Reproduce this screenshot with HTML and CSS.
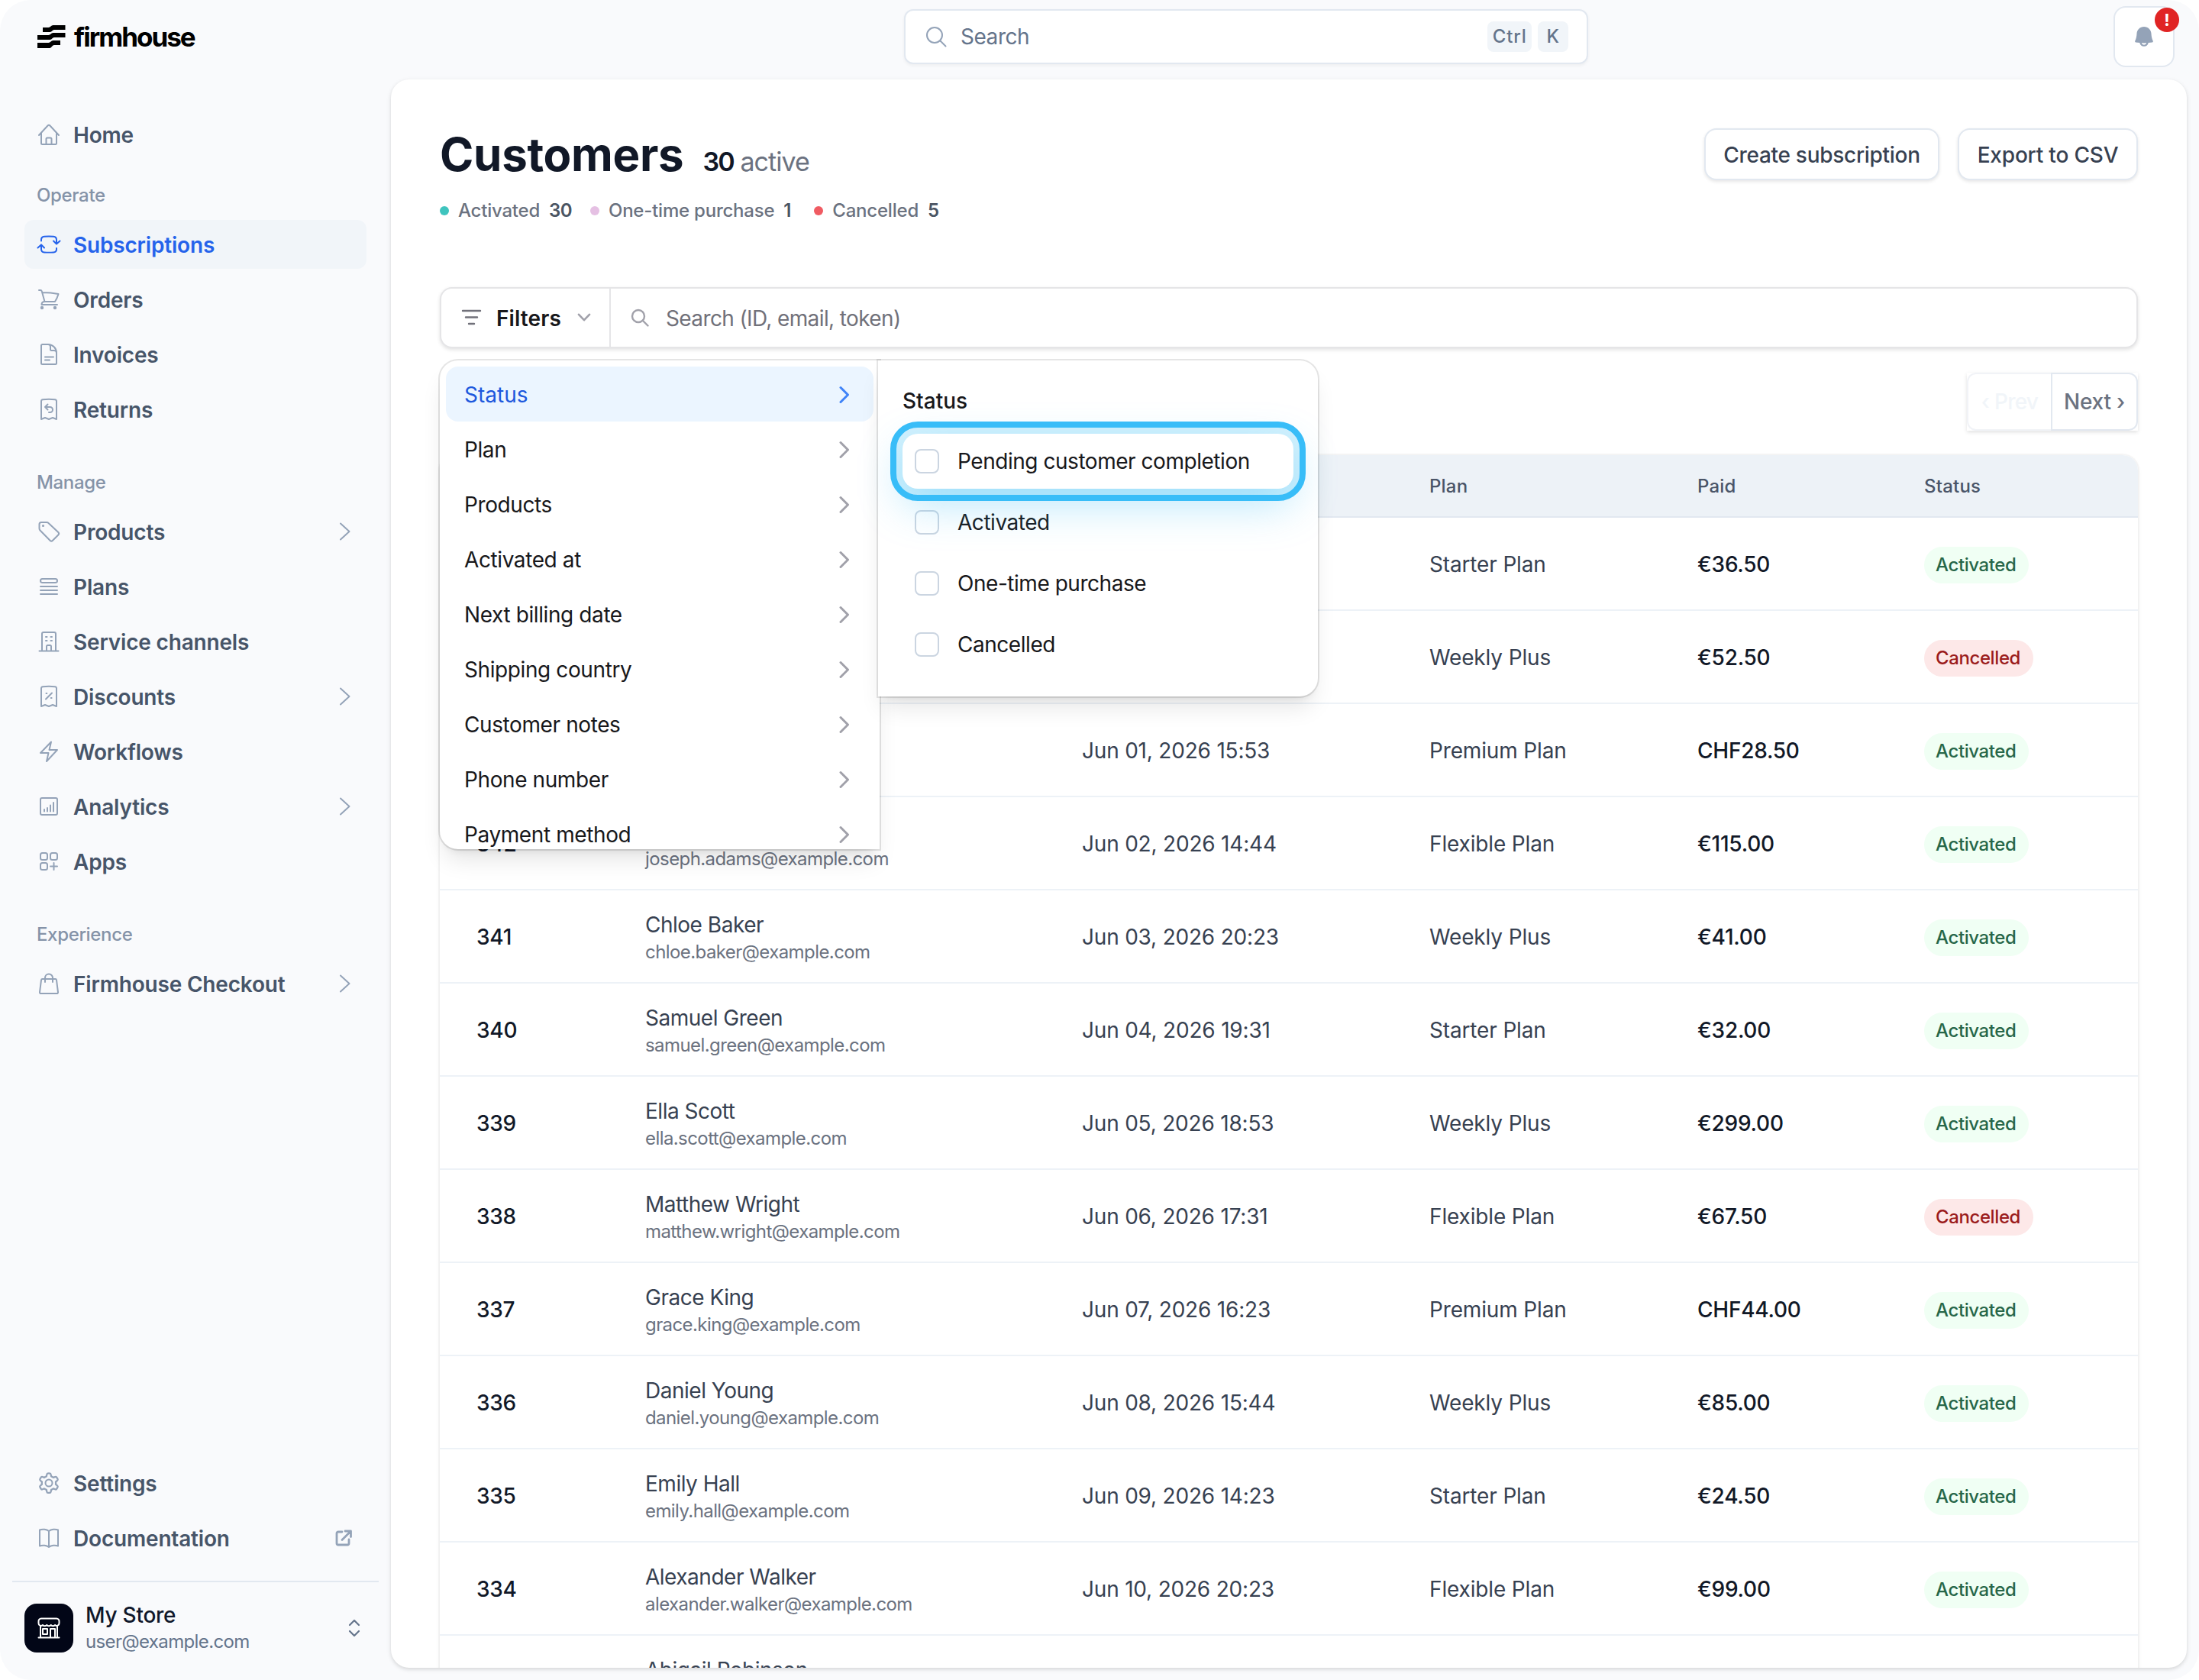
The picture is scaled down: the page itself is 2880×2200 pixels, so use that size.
FILE: index.html
```html
<!DOCTYPE html>
<html lang="en">
<head>
<meta charset="utf-8">
<title>Customers – Firmhouse</title>
<link rel="stylesheet" href="styles.css">
</head>
<body>
<svg class="sprite" aria-hidden="true">
  <symbol id="chev" viewBox="0 0 16 24"><path d="M2 1.5 13.5 12 2 22.5"/></symbol>
  <symbol id="chev-s" viewBox="0 0 14 24"><path d="M2 2.5 11.5 12 2 21.5"/></symbol>
</svg>
<div class="app">
  <aside class="sidebar">
    <div class="logo">
      <svg width="37" height="30" viewBox="0 0 37 30"><g fill="#000"><path d="M7 3h7.500c2.500-.2 3.500-3 6-3H36.500v6H22c-2.500 0-3 3-5.500 3H7z"/><path d="M0 13h14.500c2.500-.2 3.500-3 6-3H36.500v6H22c-2.500 0-3 3-5.500 3H0z"/><path d="M0 23h14.500c2.500-.2 3.500-3 6-3H30v6H22c-2.500 0-3 3-5.500 4H0z"/></g></svg>
      <span class="wordmark">firmhouse</span>
    </div>
    <nav class="nav">
      <a class="item"><svg class="ic" viewBox="0 0 32 32"><path d="M3 17 14.800 4.300a1.700 1.700 0 0 1 2.400 0L29 17"/><path d="M6 14v13.500A1.500 1.500 0 0 0 7.500 29h17a1.500 1.500 0 0 0 1.500-1.500V14M12.500 28.500V22a1.500 1.500 0 0 1 1.500-1.500h4a1.500 1.500 0 0 1 1.500 1.500v6.500"/></svg>Home</a>
      <h2 class="label first">Operate</h2>
      <a class="item on"><svg class="ic" viewBox="0 0 32 32"><path d="M6 11.500V10c0-2.500 1.500-4 4-4.200 4-.3 8-.3 12 0 2.500.2 4 1.700 4 4.200v5M22 11.500l4 4 4.500-4M26 21v1.500c0 2.500-1.500 3.700-4 3.900-4 .3-8 .3-12 0-2.500-.2-4-1.700-4-4.200V16.500M1.500 20.500 6 16.500l4 4"/></svg>Subscriptions</a>
      <a class="item"><svg class="ic" viewBox="0 0 32 32"><path d="M3 4h2c1 0 1.500.5 1.800 1.500L10.500 19M7.300 7c7 0 14 .5 21.200 2-1 3.500-2.500 7-4.500 10H10.500C8 19 6.500 20.500 6.500 23H27"/><circle cx="7" cy="27" r="1.200" fill="currentColor"/><circle cx="24" cy="27" r="1.200" fill="currentColor"/></svg>Orders</a>
      <a class="item"><svg class="ic" viewBox="0 0 32 32"><path d="M15 3H7.500A1.500 1.500 0 0 0 6 4.500v23A1.500 1.500 0 0 0 7.500 29h17a1.500 1.500 0 0 0 1.500-1.500V14A11 11 0 0 0 15 3zM15 3c2 0 3 1.500 3 3v3.500a1.500 1.500 0 0 0 1.500 1.500H23c1.500 0 3 1.500 3 3M11 19.500h11M11 23.500h6"/></svg>Invoices</a>
      <a class="item"><svg class="ic" viewBox="0 0 32 32"><path d="M6 29V5.500C6 4.200 6.800 3.300 8 3.200c5.300-.5 10.700-.5 16 0 1.200.1 2 1 2 2.300V29l-5-2-5 2-5-2z"/><path d="M14.500 9.500 11 13l3.500 3.500M11 13h6.500a3.500 3.500 0 0 1 0 7H16"/></svg>Returns</a>
      <h2 class="label">Manage</h2>
      <a class="item"><svg class="ic" viewBox="0 0 32 32"><path d="M13 4H6a2.500 2.500 0 0 0-2.500 2.500V12c0 1 .3 1.800 1 2.500L17.500 27.800c1 1 2.500 1 3.500 0l7.300-7.300c1-1 1-2.500 0-3.500L15.500 4.900C14.800 4.200 14 4 13 4z"/><circle cx="8.500" cy="8.500" r=".6" fill="currentColor"/></svg>Products<svg class="cv" viewBox="0 0 16 24"><use href="#chev"/></svg></a>
      <a class="item"><svg class="ic" viewBox="0 0 32 32"><rect x="5" y="6" width="22" height="5" rx="2.500"/><path d="M5 16h22M5 21h22M5 26h22"/></svg>Plans</a>
      <a class="item"><svg class="ic" viewBox="0 0 32 32"><path d="M3.500 28.500h25M7 28.500V6a2 2 0 0 1 2-2h14a2 2 0 0 1 2 2v22.500M13 28v-5.500a1.500 1.500 0 0 1 1.500-1.500h3a1.500 1.500 0 0 1 1.500 1.500V28M12 10h1.500M18.500 10H20M12 15h1.500M18.500 15H20"/></svg>Service channels</a>
      <a class="item"><svg class="ic" viewBox="0 0 32 32"><path d="M6 29V5.500C6 4.200 6.800 3.300 8 3.200c5.300-.5 10.700-.5 16 0 1.200.1 2 1 2 2.300V29l-5-2-5 2-5-2z"/><path d="m12 19.500 8-8M12.500 12h.8M18.800 18h.8"/></svg>Discounts<svg class="cv" viewBox="0 0 16 24"><use href="#chev"/></svg></a>
      <a class="item"><svg class="ic" viewBox="0 0 32 32"><path d="M5 18 19 3.500 16.500 14H27L13 29l2.500-11z"/></svg>Workflows</a>
      <a class="item"><svg class="ic" viewBox="0 0 32 32"><rect x="5" y="5" width="22" height="22" rx="2"/><path d="M10 20v2.500M14 18v4.500M18 14.500v8M22 11v11.500"/></svg>Analytics<svg class="cv" viewBox="0 0 16 24"><use href="#chev"/></svg></a>
      <a class="item"><svg class="ic" viewBox="0 0 32 32"><rect x="5" y="5" width="9" height="9" rx="2.500"/><rect x="18" y="5" width="9" height="9" rx="2.500"/><rect x="5" y="18" width="9" height="9" rx="2.500"/><path d="M22.500 18v9M18 22.500h9"/></svg>Apps</a>
      <h2 class="label">Experience</h2>
      <a class="item"><svg class="ic" viewBox="0 0 32 32"><path d="M7.500 10h17a1.500 1.500 0 0 1 1.500 1.300l2 16a1.500 1.500 0 0 1-1.500 1.700h-21A1.500 1.500 0 0 1 4 27.300l2-16A1.500 1.500 0 0 1 7.500 10zM11 14V8.500a5 5 0 0 1 10 0V14"/></svg>Firmhouse Checkout<svg class="cv" viewBox="0 0 16 24"><use href="#chev"/></svg></a>
    </nav>
    <nav class="nav lower">
      <a class="item"><svg class="ic" viewBox="0 0 32 32"><path d="M13.700 5.500a1.500 1.500 0 0 1 1.500-1.300h1.600a1.500 1.500 0 0 1 1.500 1.300l.4 2.100c.9.300 1.700.8 2.400 1.400l2-.8a1.500 1.500 0 0 1 1.900.7l.9 1.600a1.500 1.500 0 0 1-.4 1.900l-1.700 1.400a9 9 0 0 1 0 2.800l1.700 1.400a1.500 1.500 0 0 1 .4 1.900l-.9 1.600a1.500 1.500 0 0 1-1.900.7l-2-.8c-.7.600-1.500 1.100-2.400 1.400l-.4 2.100a1.500 1.500 0 0 1-1.500 1.300h-1.600a1.500 1.500 0 0 1-1.500-1.300l-.4-2.100c-.9-.3-1.700-.8-2.400-1.400l-2 .8a1.500 1.500 0 0 1-1.900-.7l-.9-1.600a1.500 1.500 0 0 1 .4-1.900l1.700-1.400a9 9 0 0 1 0-2.800l-1.700-1.400a1.500 1.500 0 0 1-.4-1.900L7 8.900a1.500 1.500 0 0 1 1.900-.7l2 .8c.7-.6 1.500-1.100 2.400-1.400z" transform="translate(-2.600 -1.500) scale(1.160)"/><circle cx="16" cy="16" r="4.500"/></svg>Settings</a>
      <a class="item"><svg class="ic" viewBox="0 0 32 32"><path d="M16 7C13 4.500 7.500 4 4 5.500v21c3.500-1.500 9-1 12 1.500 3-2.500 8.500-3 12-1.500v-21C24.500 4 19 4.500 16 7zM16 7v21"/></svg>Documentation<svg class="ext" viewBox="0 0 22 22"><path d="M9 3H4a2 2 0 0 0-2 2v13a2 2 0 0 0 2 2h12a2 2 0 0 0 2-2v-5M13 2h7.500v7.500M20 2.500 9 13.500"/></svg></a>
    </nav>
    <div class="account">
      <span class="avatar"><svg width="32" height="32" viewBox="0 0 32 32"><path d="M5 14v14M27 14v14M2.500 28.500h27M6 3.500h20a3.500 3.500 0 0 1 3.500 4v2a3.200 3.200 0 0 1-5.400 2.500 4 4 0 0 1-5.400 0 4 4 0 0 1-5.400 0 4 4 0 0 1-5.400 0A3.200 3.200 0 0 1 2.500 9.500v-2A3.500 3.500 0 0 1 6 3.500zM8 17h6v7H8zM18 28V17h6v11"/></svg></span>
      <span class="who"><b>My Store</b><small>user@example.com</small></span>
      <svg class="updown" width="16" height="24" viewBox="0 0 16 24"><path d="M2 8l6-6 6 6M2 16l6 6 6-6"/></svg>
    </div>
  </aside>

  <div class="body">
    <header class="topbar">
      <div class="gsearch">
        <svg width="28" height="28" viewBox="0 0 28 28"><circle cx="12" cy="12" r="10"/><path d="m19.500 19.500 7 7"/></svg>
        <span class="ph">Search</span><kbd class="ctrl">Ctrl</kbd><kbd>K</kbd>
      </div>
      <div class="bell">
        <svg width="26" height="28" viewBox="0 0 26 28"><path fill="#94a3b8" d="M13 1C7.500 1 3.800 5 3.500 10c-.2 4-.9 7-2.200 9.600-.5 1 0 1.900 1 2L7.300 22a5.800 5.800 0 0 0 11.400 0l5-.4c1-.1 1.500-1 1-2-1.300-2.600-2-5.600-2.200-9.600C22.200 5 18.500 1 13 1zM9.800 22.300c2.200.2 4.200.2 6.400 0a3.300 3.300 0 0 1-6.400 0z"/></svg>
        <span class="alert">!</span>
      </div>
    </header>

    <main class="card">
      <div class="head">
        <div class="title"><h1>Customers</h1><span class="count"><b>30</b> active</span></div>
        <div class="actions"><button class="btn create">Create subscription</button><button class="btn export">Export to CSV</button></div>
      </div>
      <div class="legend">
        <span class="key"><i class="dot teal"></i>Activated<b>30</b></span>
        <span class="key"><i class="dot pink"></i>One-time purchase<b>1</b></span>
        <span class="key"><i class="dot red"></i>Cancelled<b>5</b></span>
      </div>

      <div class="filterbar">
        <div class="filters">
          <svg width="28" height="24" viewBox="0 0 28 24" stroke="#71717a" stroke-width="2.400"><path d="M3 3h23M7 11.500h15M11 20h7"/></svg>
          <b>Filters</b>
          <svg class="down" width="18" height="12" viewBox="0 0 18 12" stroke="#a1a1aa" stroke-width="2.600"><path d="m2 1.800 7 7.400 7-7.400"/></svg>
        </div>
        <div class="query">
          <svg width="24" height="24" viewBox="0 0 24 24" stroke="#a1a1aa" stroke-width="2.400"><circle cx="10" cy="10" r="8"/><path d="m16 16 6.500 6.500"/></svg>
          <span>Search (ID, email, token)</span>
        </div>

        <div class="menu">
          <a class="mi on">Status<svg><use href="#chev-s"/></svg></a>
          <a class="mi">Plan<svg><use href="#chev-s"/></svg></a>
          <a class="mi">Products<svg><use href="#chev-s"/></svg></a>
          <a class="mi">Activated at<svg><use href="#chev-s"/></svg></a>
          <a class="mi">Next billing date<svg><use href="#chev-s"/></svg></a>
          <a class="mi">Shipping country<svg><use href="#chev-s"/></svg></a>
          <a class="mi">Customer notes<svg><use href="#chev-s"/></svg></a>
          <a class="mi">Phone number<svg><use href="#chev-s"/></svg></a>
          <a class="mi">Payment method<svg><use href="#chev-s"/></svg></a>
        </div>
        <div class="submenu">
          <h3>Status</h3>
          <label class="opt focus"><i class="box"></i>Pending customer completion</label>
          <label class="opt"><i class="box"></i>Activated</label>
          <label class="opt"><i class="box"></i>One-time purchase</label>
          <label class="opt"><i class="box"></i>Cancelled</label>
        </div>
      </div>

      <div class="pager"><span class="prev">‹ Prev</span><span class="next">Next ›</span></div>

      <div class="table">
        <div class="tr th"><span></span><span></span><span></span><span>Plan</span><span>Paid</span><span>Status</span></div>
        <div class="tr"><b></b><span></span><span></span><span>Starter Plan</span><b>€36.50</b><em class="ok">Activated</em></div>
        <div class="tr"><b></b><span></span><span></span><span>Weekly Plus</span><b>€52.50</b><em class="no">Cancelled</em></div>
        <div class="tr"><b></b><span></span><span class="date">Jun 01, 2026 15:53</span><span>Premium Plan</span><b>CHF28.50</b><em class="ok">Activated</em></div>
        <div class="tr"><b>342</b><span class="cust">Joseph Adams<small>joseph.adams@example.com</small></span><span class="date">Jun 02, 2026 14:44</span><span>Flexible Plan</span><b>€115.00</b><em class="ok">Activated</em></div>
        <div class="tr"><b>341</b><span class="cust">Chloe Baker<small>chloe.baker@example.com</small></span><span class="date">Jun 03, 2026 20:23</span><span>Weekly Plus</span><b>€41.00</b><em class="ok">Activated</em></div>
        <div class="tr"><b>340</b><span class="cust">Samuel Green<small>samuel.green@example.com</small></span><span class="date">Jun 04, 2026 19:31</span><span>Starter Plan</span><b>€32.00</b><em class="ok">Activated</em></div>
        <div class="tr"><b>339</b><span class="cust">Ella Scott<small>ella.scott@example.com</small></span><span class="date">Jun 05, 2026 18:53</span><span>Weekly Plus</span><b>€299.00</b><em class="ok">Activated</em></div>
        <div class="tr"><b>338</b><span class="cust">Matthew Wright<small>matthew.wright@example.com</small></span><span class="date">Jun 06, 2026 17:31</span><span>Flexible Plan</span><b>€67.50</b><em class="no">Cancelled</em></div>
        <div class="tr"><b>337</b><span class="cust">Grace King<small>grace.king@example.com</small></span><span class="date">Jun 07, 2026 16:23</span><span>Premium Plan</span><b>CHF44.00</b><em class="ok">Activated</em></div>
        <div class="tr"><b>336</b><span class="cust">Daniel Young<small>daniel.young@example.com</small></span><span class="date">Jun 08, 2026 15:44</span><span>Weekly Plus</span><b>€85.00</b><em class="ok">Activated</em></div>
        <div class="tr"><b>335</b><span class="cust">Emily Hall<small>emily.hall@example.com</small></span><span class="date">Jun 09, 2026 14:23</span><span>Starter Plan</span><b>€24.50</b><em class="ok">Activated</em></div>
        <div class="tr"><b>334</b><span class="cust">Alexander Walker<small>alexander.walker@example.com</small></span><span class="date">Jun 10, 2026 20:23</span><span>Flexible Plan</span><b>€99.00</b><em class="ok">Activated</em></div>
        <div class="tr"><b></b><span class="cust">Abigail Robinson<small>&nbsp;</small></span></div>
      </div>
    </main>
  </div>
</div>
</body>
</html>
```
FILE: styles.css
```css
*{box-sizing:border-box}
html{background:#fff}
body{margin:0;font:400 28px/40px Inter,"Liberation Sans",sans-serif;color:#374151}
h1,h2,h3{margin:0}
svg{fill:none;stroke-linecap:round;stroke-linejoin:round;flex:none}
.sprite{display:none}
.app{display:flex;width:2880px;height:2200px;background:#f9fafc;border-radius:40px;overflow:hidden}

/* Sidebar */
.sidebar{width:512px;height:2200px;padding:0 16px;display:flex;flex-direction:column}
.logo{display:flex;align-items:center;gap:11px;height:96px;padding-left:33px}
.wordmark{font-weight:700;font-size:35px;letter-spacing:-2px;color:#000}
.nav{display:flex;flex-direction:column;gap:8px;padding:48px 16px 0}
.nav.lower{margin-top:auto;padding:0 16px 24px}
.item{display:flex;align-items:center;height:64px;padding:1px 18px 0 16px;border-radius:12px;font-weight:600;letter-spacing:-.18px;color:#475569}
.item svg{margin-top:-1px}
.item.on{background:#f1f5f9;color:#2563eb}
.ic{width:32px;height:32px;margin-right:16px;color:#94a3b8;stroke:currentColor;stroke-width:2}
.item.on .ic{color:#2563eb}
.cv{width:16px;height:24px;margin-left:auto;margin-right:2px;stroke:#94a3b8;stroke-width:2}
.ext{width:22px;height:22px;margin-left:auto;margin-right:1px;stroke:#94a3b8;stroke-width:2.800}
.label{height:68px;margin-top:12px;padding:28px 0 0 16px;font-weight:500;font-size:24px;line-height:32px;letter-spacing:-.35px;color:#8593a8}
.label.first{height:64px;margin:0;padding-top:24px}
.account{display:flex;align-items:center;border-top:2px solid #e2e8f0;height:130px;padding:0 24px 8px 16px}
.avatar{display:flex;align-items:center;justify-content:center;width:64px;height:64px;border-radius:16px;background:#020617}
.avatar svg{stroke:#fff;stroke-width:2}
.who{display:flex;flex-direction:column;margin:-1px 0 0 16px}
.who b{font-weight:500;line-height:35px;letter-spacing:-.25px;color:#0f172a}
.who small{font-size:24px;line-height:33px;letter-spacing:-.62px;color:#64748b}
.updown{margin-left:auto;stroke:#64748b;stroke-width:2.200}

/* Top bar */
.body{width:2368px;display:flex;flex-direction:column}
.topbar{height:104px;padding-left:672px;padding-top:12px;display:flex}
.gsearch{display:flex;align-items:center;width:896px;height:72px;padding:0 24px 0 26px;background:#fff;border:2px solid #e2e8f0;border-radius:12px;box-shadow:0 2px 4px rgba(0,0,0,.05)}
.gsearch svg{stroke:#94a3b8;stroke-width:2}
.ph{margin:0 auto 0 18px;letter-spacing:-.47px;color:#64748b}
kbd{height:40px;padding:0 12px;border-radius:8px;background:#f1f5f9;font:500 24px/40px Inter,"Liberation Sans",sans-serif;color:#64748b;margin-left:8px}
.ctrl{letter-spacing:.8px;padding:0 6px 0 7px}
.bell{position:relative;display:flex;align-items:center;justify-content:center;width:80px;height:80px;margin:-4px 32px 0 auto;background:#fff;border:2px solid #e2e8f0;border-radius:16px}
.alert{position:absolute;right:-8px;top:0;width:32px;height:32px;border-radius:50%;background:#e02424;color:#fff;font-weight:700;font-size:22px;line-height:32px;text-align:center}

/* Content card */
.card{height:2080px;width:2352px;padding:64px 64px 0;background:#fff;border-radius:24px;overflow:hidden;box-shadow:0 2px 6px rgba(0,0,0,.1),0 2px 4px rgba(0,0,0,.06)}
.head{display:flex;justify-content:space-between;height:80px}
.title{display:flex;align-items:baseline;gap:25px;height:72px;margin-top:-2px}
h1{font-weight:700;font-size:60px;line-height:72px;letter-spacing:-.3px;color:#111827}
.count{font-size:34px;letter-spacing:-.96px;color:#6b7280}
.count b{font-weight:600;color:#111827;letter-spacing:-1.800px}
.actions{display:flex;gap:24px}
.btn{height:68px;border:2px solid #e2e8f0;border-radius:16px;background:#fff;box-shadow:0 2px 4px rgba(0,0,0,.1);font:500 28px/40px Inter,"Liberation Sans",sans-serif;color:#374151;padding:1px 0 0;white-space:nowrap}
.create{width:308px;letter-spacing:-.29px}
.export{width:236px;letter-spacing:-.19px}
.legend{display:flex;gap:24px;height:56px;align-items:center;font-weight:500;font-size:24px;letter-spacing:-.22px;color:#6b7280}
.key{display:flex;align-items:center}
.key b{font-weight:600;color:#4b5563;min-width:16px;margin-left:12px;letter-spacing:-.6px}
.dot{width:12px;height:12px;border-radius:50%;margin-right:12px}
.teal{background:#3fc4be}
.pink{background:#e5c0e3}
.red{background:#f05b62}

.filterbar{position:relative;z-index:2;display:flex;height:80px;margin-top:72px;border:2px solid #e5e5e7;border-radius:16px;background:#fff;box-shadow:0 2px 5px rgba(0,0,0,.12)}
.filters{display:flex;align-items:center;width:222px;padding-left:25px;border-right:2px solid #e5e5e7}
.filters b{font-weight:600;margin:1px 21px 0 19px;color:#18181b;letter-spacing:.1px}
.query{display:flex;align-items:center;padding-left:26px;gap:22px;letter-spacing:-.62px;color:#71717a}
.query span{padding-top:1px}

/* Filter menu and its status panel */
.menu{position:absolute;left:-2px;top:94px;width:576px;height:640px;padding:8px;overflow:hidden;background:#fff;border-radius:24px 0 0 24px;box-shadow:0 0 0 2px rgba(0,0,0,.1),0 20px 30px -6px rgba(0,0,0,.1),0 8px 12px -8px rgba(0,0,0,.12)}
.mi{display:flex;align-items:center;justify-content:space-between;width:560px;height:72px;padding:1px 31px 0 24px;border-radius:16px;letter-spacing:-.4px;color:#18181b}
.mi svg{width:14px;height:24px;stroke:#a1a1aa;stroke-width:3}
.mi.on{background:#ebf5ff;color:#1d58dd;letter-spacing:0}
.mi.on svg{stroke:#3f83f8}
.submenu{position:absolute;left:572px;top:94px;width:576px;height:440px;padding:32px;background:#fff;border-radius:0 24px 24px 0;box-shadow:0 0 0 2px rgba(0,0,0,.1),0 20px 30px -6px rgba(0,0,0,.1),0 8px 12px -8px rgba(0,0,0,.12)}
h3{font-weight:500;font-size:28px;line-height:42px;height:40px;color:#18181b}
.opt{display:flex;align-items:center;height:72px;width:512px;margin-bottom:8px;padding-left:16px;border-radius:20px;letter-spacing:-.46px;color:#18181b}
h3+.opt{margin-top:24px}
.box{width:32px;height:32px;margin-right:24px;border:2px solid #cbd5e1;border-radius:8px;background:#fff}
.focus{position:relative;outline:8px solid #38bdf8;outline-offset:8px;box-shadow:0 0 0 8px rgba(56,189,248,.22),0 20px 56px rgba(56,189,248,.36)}

.pager{display:flex;width:224px;height:76px;margin:32px 0 32px auto;background:#fff;box-shadow:0 2px 5px rgba(0,0,0,.12);font-weight:500}
.pager span{display:flex;align-items:center;justify-content:center;border:2px solid #e2e8f0}
.pager .prev{width:110px;border-color:#f1f3f7;border-right:0;border-radius:12px 0 0 12px;color:#f1f5f9;letter-spacing:-.77px}
.pager .next{width:114px;border-radius:0 12px 12px 0;color:#6b7280;letter-spacing:-.22px}

.table{border-radius:20px 20px 0 0;box-shadow:0 0 0 2px rgba(0,0,0,.03),0 2px 6px rgba(0,0,0,.06)}
.tr{display:grid;grid-template-columns:220px 573px 455px 351px 297px 1fr;align-items:center;height:122px;padding:1px 0 0 48px;border-bottom:2px solid #edf2f7}
.tr b{font-weight:500;color:#111827;letter-spacing:-.25px}
.tr span{letter-spacing:-.15px}
.th{height:82px;border-radius:20px 20px 0 0;background:#edf2f7;border-bottom-color:#e2e8f0;font-weight:500;font-size:24px;color:#4a5568}
.th span{letter-spacing:.2px}
.tr .date{letter-spacing:-.2px}
.tr .cust{padding-left:1px;letter-spacing:-.49px}
.cust small{display:block;margin-top:-1px;font-size:24px;line-height:33px;letter-spacing:-.58px;color:#6b7280}
em{justify-self:start;margin-top:3px;height:48px;padding:0 17px 0 15px;border-radius:24px;font:500 24px/48px Inter,"Liberation Sans",sans-serif;letter-spacing:-.4px}
.ok{background:#f0fff4;color:#276749}
.no{background:#fde8e8;color:#9b1c1c}
```
